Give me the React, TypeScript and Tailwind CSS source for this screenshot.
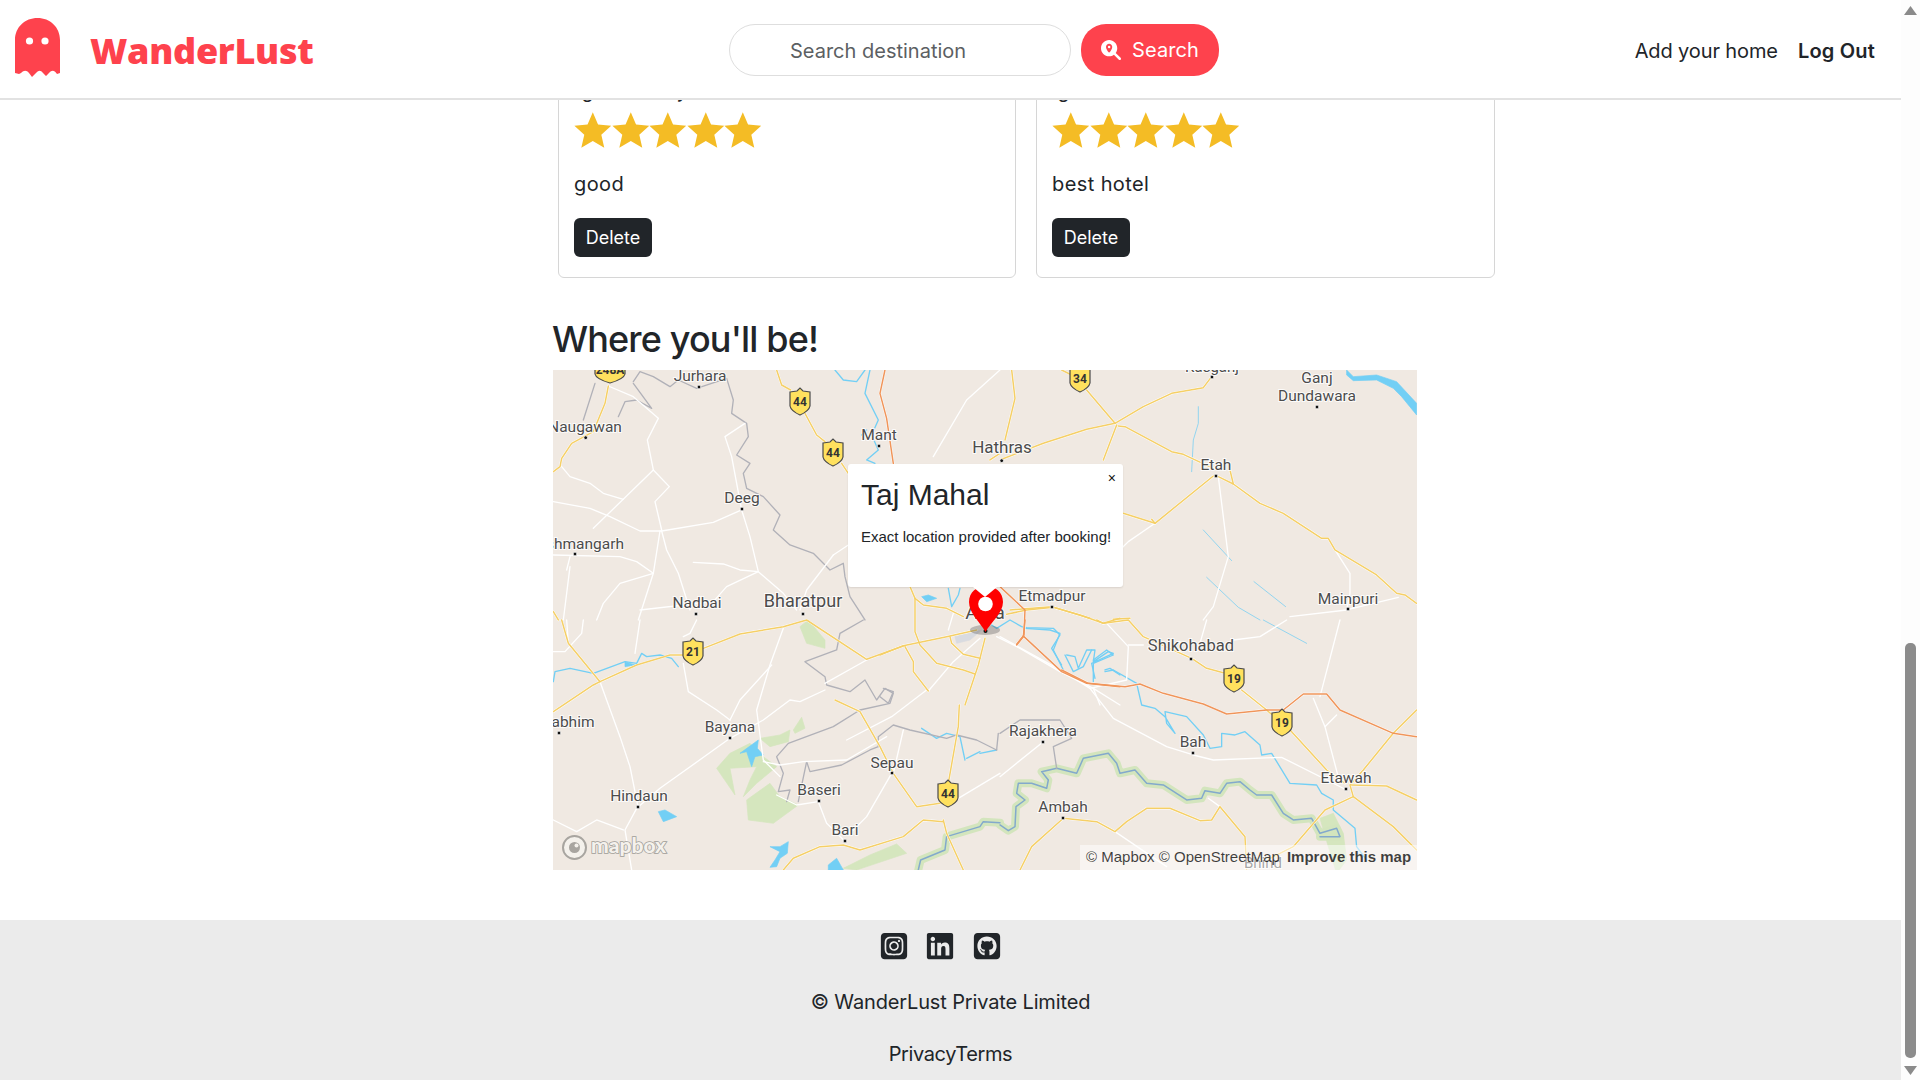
import React from "react";
import { FaMagnifyingGlassLocation, FaSquareInstagram, FaLinkedin, FaSquareGithub } from "react-icons/fa6";

type Q = { o: [number, number]; white?: string[]; yellow?: string[]; orange?: string[]; water?: string[]; thin?: string[]; border?: string[]; park?: string[]; fillWater?: string[]; urban?: string[]; chambal?: string[] };

const quads: Q[] = [
  {
    o: [550, 360],
    white: [
      "175,78 250,110 325,175 292,240 310,330 358,380 315,425 335,510",
      "310,330 130,505",
      "35,320 60,350 120,370 160,400 220,418",
      "10,425 120,445 180,470 270,513 335,513 490,487 575,450",
      "575,450 600,530 625,635 700,700 740,750",
      "335,513 350,570 385,640 420,750",
      "330,513 310,640 265,780",
      "10,585 210,590 260,605 310,640",
      "310,640 210,670 160,730 140,780",
      "60,620 40,780",
      "50,630 60,590",
      "430,607 520,612 570,630 625,635",
      "625,635 530,680 490,725 270,750",
      "585,190 525,230 545,290 575,450",
      "850,585 770,690 750,750",
      "850,585 895,555",
      "1350,30 1250,120 1150,290",
    ],
    yellow: [
      "680,30 695,75 722,90",
      "765,160 800,225 825,245",
      "875,310 895,340",
      "175,78 165,130 130,215 65,250 35,295 30,320 10,335",
      "1320,300 1350,280",
      "10,755 25,780",
    ],
    orange: ["1005,30 990,100 1010,175 1030,310"],
    water: ["855,30 880,60 920,65 945,30", "960,30 945,100 985,180 965,225 985,270 950,300 975,310", "935,225 950,210"],
    border: [
      "250,65 270,35 310,50 360,80 385,60 440,85 530,55 550,120 545,160 590,190 595,230 560,285 600,310 580,340 590,385 640,410 690,465 670,510 720,555 790,580 840,630 880,610 885,650 900,710 945,780",
      "100,180 135,70",
      "205,170 225,125 260,120 305,145 250,70",
    ],
  },
  {
    o: [1000, 360],
    white: ["465,490 385,545 365,565", "655,350 685,590 640,740 610,780", "1005,570 1050,640 1050,700 1040,750", "870,770 1040,750 1195,712"],
    yellow: [
      "185,30 215,45",
      "35,30 45,115 15,240",
      "260,90 345,190 430,140 515,100 610,83 635,50",
      "345,190 260,208 130,250 5,298",
      "350,195 310,300",
      "355,198 375,200 515,275 550,283 640,325",
      "655,350 700,372 780,430 850,460 965,535 985,535 1005,570 1130,645 1190,700 1215,705 1250,730",
      "690,330 700,372",
      "640,348 465,490 370,460",
      "465,490 455,478",
      "30,750 155,740 270,775",
      "340,778 390,775",
    ],
    thin: ["595,140 595,190 580,240 575,335", "610,510 695,602", "620,652 715,742 780,780", "762,665 857,740"],
    fillWater: ["1040,30 1060,50 1130,45 1190,65 1250,130 1250,165 1205,110 1180,85 1130,60 1060,62 1040,45"],
  },
  {
    o: [550, 620],
    park: [
      "500,445 540,400 600,370 640,410 680,440 620,490 580,530 600,480 620,440 540,445 555,525",
      "590,540 660,490 690,530 745,555 670,610 595,600",
      "630,355 690,345 720,330 715,365 660,380",
      "730,330 755,292 765,325 735,340",
      "750,20 775,0 825,60 825,85 770,70",
      "880,745 960,705 1040,672 1070,700 980,730 920,750",
    ],
    white: [
      "700,25 660,135 620,270 640,420 690,470",
      "665,135 570,240 540,300",
      "400,130 415,215 500,270 540,300",
      "825,210 750,245 720,240 640,300 540,355 330,505 260,565 225,630 245,750",
      "825,190 950,120",
      "10,600 80,635 140,600 220,630",
      "640,425 690,435 760,425 890,420 1010,350",
      "150,185 210,350 240,440 265,565",
      "680,525 740,555 805,545",
      "805,545 830,610 884,663",
      "1025,460 950,590 910,630",
      "1060,330 1030,460",
      "1130,210 1025,290 890,360",
      "1200,550 1350,460",
      "50,0 55,70",
      "270,0 255,100",
      "440,0 420,40 400,50",
      "100,0 95,40 45,95 10,95",
    ],
    yellow: [
      "10,275 130,195 150,185 260,135 360,105 400,105",
      "460,85 570,42 700,20 770,0 950,118 1060,78",
      "35,0 55,70 150,185",
      "855,240 930,275 990,380 1030,460 1100,560 1170,550",
      "1228,255 1225,320 1195,490",
      "1180,600 1190,640 1240,750",
      "1180,605 1120,600 1060,650 930,690 880,675 810,680 730,715 700,750",
    ],
    border: [
      "940,0 870,40 860,90 765,125 825,170 830,195 900,215 945,180 980,240 1005,205 1030,220 1020,250 930,270 850,320 715,370 680,410 700,460 685,515 720,510 710,545",
      "770,425 750,520 745,545",
      "770,425 780,455 875,435 960,390 985,380 985,350 1030,315 1080,330 1190,355 1220,345 1280,360 1340,390",
      "1345,340 1340,390",
    ],
    water: ["10,185 15,155 60,145 130,160 225,125 260,130 275,100 290,110 330,105 365,115 385,140", "1115,325 1160,355 1190,340 1230,350 1245,420", "1250,415 1290,395", "1290,400 1340,390"],
    fillWater: [
      "625,360 570,400 590,395 605,440 615,410 640,405 622,385",
      "325,575 345,570 380,590 340,605",
      "660,680 690,680 715,665 712,700 690,715 680,740 660,742 675,720 690,695",
      "835,735 860,715 880,750 835,750",
      "225,125 255,135 225,140",
    ],
    chambal: ["1105,750 1112,720 1185,690 1190,650 1290,620 1300,605 1350,608"],
  },
  {
    o: [1000, 620],
    park: ["960,595 1000,580 1030,640 1040,720 1010,760 985,680"],
    chambal: ["0,615 25,632 45,620 48,560 75,540 50,520 55,490 95,490 140,505 145,480 125,455 170,445 230,460 250,415 325,400 350,430 360,460 405,450 440,490 490,495 560,540 605,535 615,512 660,520 680,490 720,485 750,510 770,525 815,525 850,580 880,600 935,595 960,640 1010,625 1020,650 960,650"],
    white: [
      "0,50 190,155 270,205 340,295 500,380 580,405 640,420 845,412 1040,510",
      "270,205 380,180 385,80 320,10",
      "385,75 430,75",
      "700,60 780,50 860,0",
      "960,230 1020,0",
      "940,235 975,320 1020,490",
      "975,320 1010,285",
      "0,470 130,365",
      "345,635 500,740",
      "625,535 660,560",
      "600,70 620,0",
    ],
    yellow: [
      "290,0 310,10 385,0 430,50 575,115 620,145 670,158",
      "725,210 800,270 875,335 980,450 1035,490",
      "1250,270 1180,340 1090,450 1050,495 1060,530 1180,620 1250,690",
      "1055,495 1160,498 1250,540",
      "1060,530 975,570 880,680 800,720",
      "60,750 95,680 190,595 290,605 345,635 380,605 440,565 510,565 600,602 635,600 660,560 735,650 740,750",
    ],
    orange: ["185,150 265,190 375,200 420,192 490,220 610,252 680,282 800,270 850,270 910,222 980,222 1020,270 1180,340 1250,350", "75,0 70,50 50,75"],
    water: [
      "75,25 150,30 180,40 160,90 190,150",
      "200,105 225,110 235,145 260,90 285,90 280,125 325,95 340,100 275,130 285,175",
      "315,155 340,150 410,190 425,255 465,265 495,290 525,340 500,310 495,275 560,290 610,345 630,385 665,380 665,340 705,345 735,335 780,375 785,405 815,400 870,490 950,495 965,520 1000,540 1000,570 1065,625 1070,680 1100,720",
    ],
    thin: ["790,0 920,70"],
    border: ["0,340 60,300 180,300 215,355 160,380 170,445"],
  },
  {
    o: [880, 575],
    urban: ["225,185 305,165 270,195 230,205"],
    white: ["145,348 220,260 300,190", "350,185 420,220 540,290 640,340 720,390", "205,165 220,115", "640,340 660,390"],
    yellow: [
      "90,35 105,70 130,90 200,100 250,125",
      "105,70 105,170 120,210 170,265 250,285 285,297",
      "0,240 70,212 200,185 290,165",
      "210,185 215,205 250,238 300,250",
      "75,215 100,260 100,290 145,348",
      "315,190 295,270 255,390",
      "380,118 440,105 520,97 600,120 670,145 720,130",
    ],
    orange: ["360,35 435,105 432,180 410,208", "432,185 545,290 620,325 720,335"],
    water: [
      "205,40 215,95 235,60 240,40",
      "335,150 350,160 390,135 425,155 440,158 520,160 540,180 515,220 545,270",
      "555,240 580,290 610,275 635,225",
      "640,255 680,225 700,240 640,265 640,320",
      "675,285 690,280 720,300",
    ],
    fillWater: ["125,65 140,80 170,70 145,60"],
    border: ["10,340 40,350 25,385 0,365"],
  },
];

const labels: [string, number, number, number, number?, number?][] = [
  ["Jurhara", 700, 381, 15.5, 699, 387],
  ["Naugawan", 585, 432, 15.5, 585.7, 437.7],
  ["Mant", 879, 440, 15.5, 879, 446],
  ["Deeg", 742, 503, 15.5, 742, 509],
  ["Lakshmangarh", 0, 549, 15.5, 575, 554],
  ["Nadbai", 697, 608, 15.5, 696, 614],
  ["Bharatpur", 803, 607, 18, 803, 614],
  ["Hathras", 1002, 453, 17, 1001.7, 460.7],
  ["Kasganj", 1212, 372, 15, 1212, 377],
  ["Ganj", 1317, 383, 15.5],
  ["Dundawara", 1317, 401, 15.5, 1317, 407],
  ["Etah", 1216, 470, 15.5, 1216, 476],
  ["Etmadpur", 1052, 601, 15.5, 1052, 607],
  ["Mainpuri", 1348, 604, 15.5, 1348, 609],
  ["Agra", 985, 619, 19],
  ["Shikohabad", 1191, 651, 16.5, 1191, 659],
  ["Rajakhera", 1043, 736, 15.5, 1043, 742],
  ["Bah", 1193, 747, 15.5, 1193, 753],
  ["Etawah", 1346, 783, 15.5, 1346, 789],
  ["Ambah", 1063, 812, 15.5, 1063, 818],
  ["Bhind", 1263, 868, 15],
  ["abhim", 573, 727, 15.5, 559, 733],
  ["Bayana", 730, 732, 15.5, 730, 738],
  ["Hindaun", 639, 801, 15.5, 638, 807],
  ["Baseri", 819, 795, 15.5, 819, 801],
  ["Sepau", 892, 768, 15.5, 892, 773],
  ["Bari", 845, 835, 15.5, 845, 841],
];

const shields: [string, number, number][] = [
  ["44", 800, 402],
  ["44", 833, 453],
  ["248A", 610, 370],
  ["34", 1080, 379],
  ["21", 693, 652],
  ["44", 948, 794],
  ["19", 1234, 679],
  ["19", 1282, 723],
];

function Layer({ pick, stroke, width, fill }: { pick: (q: Q) => string[] | undefined; stroke: string; width: number; fill?: string }) {
  return (
    <>
      {quads.map((q, i) => (
        <g key={i} transform={`translate(${q.o[0]} ${q.o[1]}) scale(0.3333)`}>
          {(pick(q) || []).map((p, j) =>
            fill ? (
              <polygon key={j} points={p} fill={fill} stroke={stroke} strokeWidth={width} strokeLinejoin="round" />
            ) : (
              <polyline key={j} points={p} fill="none" stroke={stroke} strokeWidth={width} strokeLinejoin="round" strokeLinecap="round" />
            )
          )}
        </g>
      ))}
    </>
  );
}

function MapArt() {
  return (
    <svg viewBox="553 370 864 500" className="block w-full h-full">
      <rect x="553" y="370" width="864" height="500" fill="#f0e9e2" />
      <Layer pick={(q) => q.park} stroke="#d5e6be" width={2} fill="#d5e6be" />
      <Layer pick={(q) => q.urban} stroke="#d9dbe0" width={2} fill="#d9dbe0" />
      <Layer pick={(q) => q.chambal} stroke="#d3e5bd" width={24} />
      <Layer pick={(q) => q.thin} stroke="#7fd0f2" width={2.5} />
      <Layer pick={(q) => q.water} stroke="#72cff5" width={4} />
      <Layer pick={(q) => q.fillWater} stroke="#72cff5" width={2} fill="#72cff5" />
      <Layer pick={(q) => q.chambal} stroke="#83a9cc" width={4.5} />
      <Layer pick={(q) => q.border} stroke="#b1b1b8" width={4} />
      <Layer pick={(q) => q.white} stroke="#ffffff" width={4} />
      <Layer pick={(q) => q.yellow} stroke="#ffffff" width={7} />
      <Layer pick={(q) => q.orange} stroke="#ffffff" width={7} />
      <Layer pick={(q) => q.yellow} stroke="#f5cf66" width={4.5} />
      <Layer pick={(q) => q.orange} stroke="#f0955a" width={4.5} />
      {labels.map(([t, x, y, s, dx, dy]) => (
        <g key={t}>
          {dx !== undefined && <circle cx={dx} cy={dy} r="1.9" fill="#111" stroke="#fff" strokeWidth="0.8" />}
          <text
            x={t === "Lakshmangarh" ? 624 : x}
            y={y}
            textAnchor={t === "Lakshmangarh" ? "end" : "middle"}
            fontFamily="Roboto, sans-serif"
            fontSize={s}
            fill="#4c4c4c"
            stroke="#ffffff"
            strokeWidth="2"
            strokeOpacity="0.85"
            paintOrder="stroke"
          >
            {t}
          </text>
        </g>
      ))}
      {shields.map(([t, x, y], i) => {
        const w = t.length > 2 ? 15 : 10;
        return (
          <g key={i}>
            <path
              d={`M${x - w} ${y - 10} L${x - 3} ${y - 11} L${x} ${y - 14} L${x + 3} ${y - 11} L${x + w} ${y - 10} L${x + w} ${y + 4} Q${x + w - 1} ${y + 9} ${x} ${y + 13} Q${x - w + 1} ${y + 9} ${x - w} ${y + 4} Z`}
              fill="#ffe15e"
              stroke="#4a4a4a"
              strokeWidth="1.2"
            />
            <text x={x} y={y + 4} textAnchor="middle" fontFamily="Roboto, sans-serif" fontWeight="700" fontSize="12" fill="#333">
              {t}
            </text>
          </g>
        );
      })}
      <g>
        <ellipse cx="985" cy="630" rx="15" ry="5" fill="#555" opacity="0.35" />
        <circle cx="985.5" cy="631" r="2" fill="#111" />
        <path d="M985.5 632 C980 622 969 613 969 602 C969 592 977 586 986 586 C995 586 1003 592 1003 602 C1003 613 991 622 985.5 632 Z" fill="#ff0000" />
        <circle cx="985.5" cy="604" r="7.3" fill="#fff" />
      </g>
      <g>
        <circle cx="574.5" cy="847.5" r="11.5" fill="#f4f1ec" stroke="#a8a5a0" strokeWidth="2" />
        <circle cx="574.5" cy="847.5" r="5.5" fill="#a8a5a0" />
        <circle cx="576.5" cy="845.5" r="2" fill="#f4f1ec" />
        <text x="591" y="853" fontFamily="Lato, sans-serif" fontWeight="900" fontSize="21" fill="#f4f1ec" stroke="#a09d98" strokeWidth="1.6" paintOrder="stroke">
          mapbox
        </text>
      </g>
    </svg>
  );
}

function Star() {
  return (
    <svg viewBox="0 0 38 36" className="block w-[37.6px] h-[36px]">
      <polygon points="19,0 24.3,12.5 37.6,13.8 27.6,22.9 30.6,36 19,29.2 7.4,36 10.4,22.9 0.4,13.8 13.7,12.5" fill="#f4bc25" />
    </svg>
  );
}

function Ghost() {
  return (
    <svg viewBox="0 0 45 60" className="block w-[45px] h-[60px] -mt-[4px]">
      <path
        d="M0 22 C0 9 10 0 22.5 0 C35 0 45 9 45 22 L45 55 L42 56 C39 52 37 52 34 55 L31 58 L28 55 C25.5 52 24 52 21 55 L17 59 L14 55 C11.5 52 9 52 6 55 L4 56 L0 55 Z"
        fill="#fe424d"
      />
      <circle cx="14.5" cy="23" r="3.6" fill="#fff" />
      <circle cx="30" cy="23" r="3.6" fill="#fff" />
    </svg>
  );
}

function Review({ name, text, w, nameIndent }: { name: string; text: string; w: string; nameIndent: string }) {
  return (
    <div className={`${w} h-[208px] border border-[#d6d6d6] rounded-[6px] pl-[15px] pb-[20px] flex flex-col`}>
      <div className={`h-[33px] flex items-end text-[18px] font-medium leading-[24px] text-[#212529] ${nameIndent}`}>{name}</div>
      <div className="flex mt-[8px]">
        {[0, 1, 2, 3, 4].map((i) => (
          <Star key={i} />
        ))}
      </div>
      <p className="mt-[24px] h-[24px] text-[20px] leading-[24px] text-[#212529] tracking-[0.4px]">{text}</p>
      <button className="mt-[22px] w-[78px] h-[39px] rounded-[6px] bg-[#212529] text-white text-[18px]">Delete</button>
    </div>
  );
}

export default function App() {
  return (
    <div className="flex h-screen w-[1920px] overflow-hidden bg-white font-['Inter',sans-serif] text-[#212529]">
      <div className="w-[1901px] h-full flex flex-col">
        <header className="relative z-10 h-[100px] shrink-0 bg-white border-b-2 border-[#e2e2e2] flex items-center pt-[2px] pl-[15px] pr-[26px]">
          <div className="flex items-center w-[714px]">
            <Ghost />
            <span className="ml-[30px] pt-[1px] font-['Open_Sans',sans-serif] font-extrabold text-[36px] leading-none text-[#fe424d] tracking-[-0.3px]">WanderLust</span>
          </div>
          <div className="flex items-center">
            <div className="w-[342px] h-[52px] rounded-[26px] border border-[#dedede] pl-[60px] pt-[1px] flex items-center text-[20px] text-[#5c5f63]">
              Search destination
            </div>
            <button className="ml-[10px] w-[138px] h-[52px] rounded-[25px] bg-[#fe424d] text-white text-[20px] flex items-center pl-[20px] gap-[11px] tracking-[0.1px]">
              <FaMagnifyingGlassLocation className="text-[20px]" />
              Search
            </button>
          </div>
          <div className="ml-auto pt-[1px] flex items-center gap-[20px] text-[20px] text-[#212529]">
            <span className="tracking-[-0.12px]">Add your home</span>
            <span className="font-semibold tracking-[0.2px]">Log Out</span>
          </div>
        </header>

        <main className="flex-1 flex flex-col">
          <div className="flex gap-[20px] pl-[558px] -mt-[30px]">
            <Review w="w-[458px]" name="gaurav shay" text="good" nameIndent="pl-[8px]" />
            <Review w="w-[459px]" name="g" text="best hotel" nameIndent="pl-[6px]" />
          </div>

          <h3 className="ml-[552px] mt-[40px] text-[36px] leading-[43px] font-medium mb-[9px] tracking-[-0.85px]">Where you'll be!</h3>

          <div className="relative ml-[553px] w-[864px] h-[500px] overflow-hidden">
            <MapArt />
            <div className="absolute left-[295px] top-[94px] w-[275px] h-[123px] bg-white rounded-[3px] shadow-[0_1px_2px_rgba(0,0,0,0.1)] pl-[13px] pt-[13px] font-['Liberation_Sans',sans-serif]">
              <div className="text-[30px] leading-[36px] text-[#212529]">Taj Mahal</div>
              <p className="mt-[15px] text-[15px] leading-[18px] text-[#212529] whitespace-nowrap">Exact location provided after booking!</p>
              <span className="absolute right-[7px] top-[6px] text-[14px] leading-[16px] text-[#111]">×</span>
              <span className="absolute left-[125px] top-[123px] w-0 h-0 border-l-[12px] border-r-[12px] border-t-[10px] border-l-transparent border-r-transparent border-t-white" />
            </div>
            <div className="absolute right-0 bottom-0 h-[25px] w-[337px] bg-[rgba(255,255,255,0.5)] flex items-center pl-[6px] font-['Liberation_Sans',sans-serif] text-[15px] whitespace-nowrap text-[rgba(0,0,0,0.75)]">
              <span>© Mapbox © OpenStreetMap</span>
              <span className="ml-[7px] font-bold">Improve this map</span>
            </div>
          </div>

          <footer className="mt-[50px] flex-1 bg-[#ebebeb] flex flex-col items-center pt-[12px]">
            <div className="flex items-center h-[28px] text-[#212529]">
              <FaSquareInstagram className="text-[30px] mr-[16.5px]" />
              <FaLinkedin className="text-[30px] mr-[16.5px]" />
              <FaSquareGithub className="text-[30px] mr-[21px]" />
            </div>
            <div className="mt-[30px] text-[20px] leading-[24px] tracking-[-0.14px]">© WanderLust Private Limited</div>
            <div className="mt-[28px] text-[20px] leading-[24px] tracking-[-0.4px]">PrivacyTerms</div>
          </footer>
        </main>
      </div>

      <div className="w-[19px] h-full bg-[#fdfdfd] flex flex-col items-center">
        <svg viewBox="0 0 13 9" className="block w-[13px] h-[9px] mt-[6px]">
          <polygon points="6.5,0 13,9 0,9" fill="#8a8a8a" />
        </svg>
        <div className="mt-auto w-[11px] h-[415px] rounded-[5px] bg-[#8b8b8b]" />
        <svg viewBox="0 0 13 9" className="block w-[13px] h-[9px] mt-[8px] mb-[5px]">
          <polygon points="0,0 13,0 6.5,9" fill="#8a8a8a" />
        </svg>
      </div>
    </div>
  );
}
